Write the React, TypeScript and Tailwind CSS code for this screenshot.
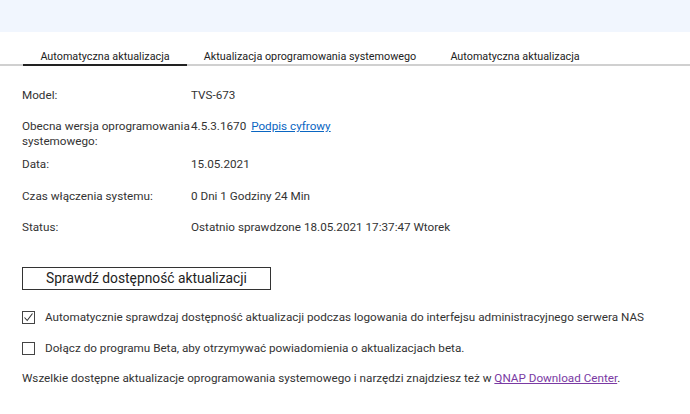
import React from "react";

function Box({ checked }: { checked?: boolean }) {
  return (
    <svg width="13" height="13" viewBox="0 0 13 13" className="shrink-0">
      <rect x="0.5" y="0.5" width="12" height="12" fill="white" stroke="#444" strokeWidth="1" />
      {checked && <path d="M2.5 6.5 L5.2 9.5 L10.5 2.5" fill="none" stroke="#333" strokeWidth="1.1" />}
    </svg>
  );
}

export default function App() {
  const font = { fontFamily: "Roboto, 'Noto Sans', sans-serif" };
  return (
    <div className="w-[690px] h-[414px] bg-white text-[#333] overflow-hidden" style={font}>
      <div className="h-[32px] bg-[#f1f6fe]" />
      <div className="h-[34px] border-b-2 border-[#d0d0d0] flex items-stretch pl-[23px] text-[10.8px] leading-[11px] text-[#222]">
        <div className="w-[164px] flex items-end justify-center pb-[2px] border-b-2 border-[#222] -mb-[2px]">Automatyczna aktualizacja</div>
        <div className="w-[246px] flex items-end justify-center pb-[2px]">Aktualizacja oprogramowania systemowego</div>
        <div className="w-[164px] flex items-end justify-center pb-[2px]">Automatyczna aktualizacja</div>
      </div>
      <div className="pl-[22px] text-[11.7px] leading-[15px]">
        <div className="h-[22px]" />
        <div className="flex h-[31px]">
          <div className="w-[169px]">Model:</div>
          <div>TVS-673</div>
        </div>
        <div className="flex h-[38px]">
          <div className="w-[169px] shrink-0 whitespace-nowrap">
            Obecna wersja oprogramowania
            <br />
            systemowego:
          </div>
          <div>
            4.5.3.1670{" "}
            <a className="text-[#0a66c2] underline ml-[2px]">Podpis cyfrowy</a>
          </div>
        </div>
        <div className="flex h-[32px]">
          <div className="w-[169px]">Data:</div>
          <div>15.05.2021</div>
        </div>
        <div className="flex h-[31px]">
          <div className="w-[169px]">Czas włączenia systemu:</div>
          <div>0 Dni 1 Godziny 24 Min</div>
        </div>
        <div className="flex h-[31px]">
          <div className="w-[169px]">Status:</div>
          <div>Ostatnio sprawdzone 18.05.2021 17:37:47 Wtorek</div>
        </div>
        <div className="h-[16px]" />
        <div className="w-[249px] h-[23px] border border-[#333] flex items-center justify-center text-[13.8px] text-[#222]">
          Sprawdź dostępność aktualizacji
        </div>
        <div className="h-[20px]" />
        <div className="flex items-center gap-[10px] h-[15px]">
          <Box checked />
          <span>Automatycznie sprawdzaj dostępność aktualizacji podczas logowania do interfejsu administracyjnego serwera NAS</span>
        </div>
        <div className="h-[16px]" />
        <div className="flex items-center gap-[10px] h-[15px]">
          <Box />
          <span>Dołącz do programu Beta, aby otrzymywać powiadomienia o aktualizacjach beta.</span>
        </div>
        <div className="h-[15px]" />
        <div className="h-[15px]">
          Wszelkie dostępne aktualizacje oprogramowania systemowego i narzędzi znajdziesz też w{" "}
          <a className="text-[#7a3aa3] underline">QNAP Download Center</a>.
        </div>
      </div>
    </div>
  );
}
